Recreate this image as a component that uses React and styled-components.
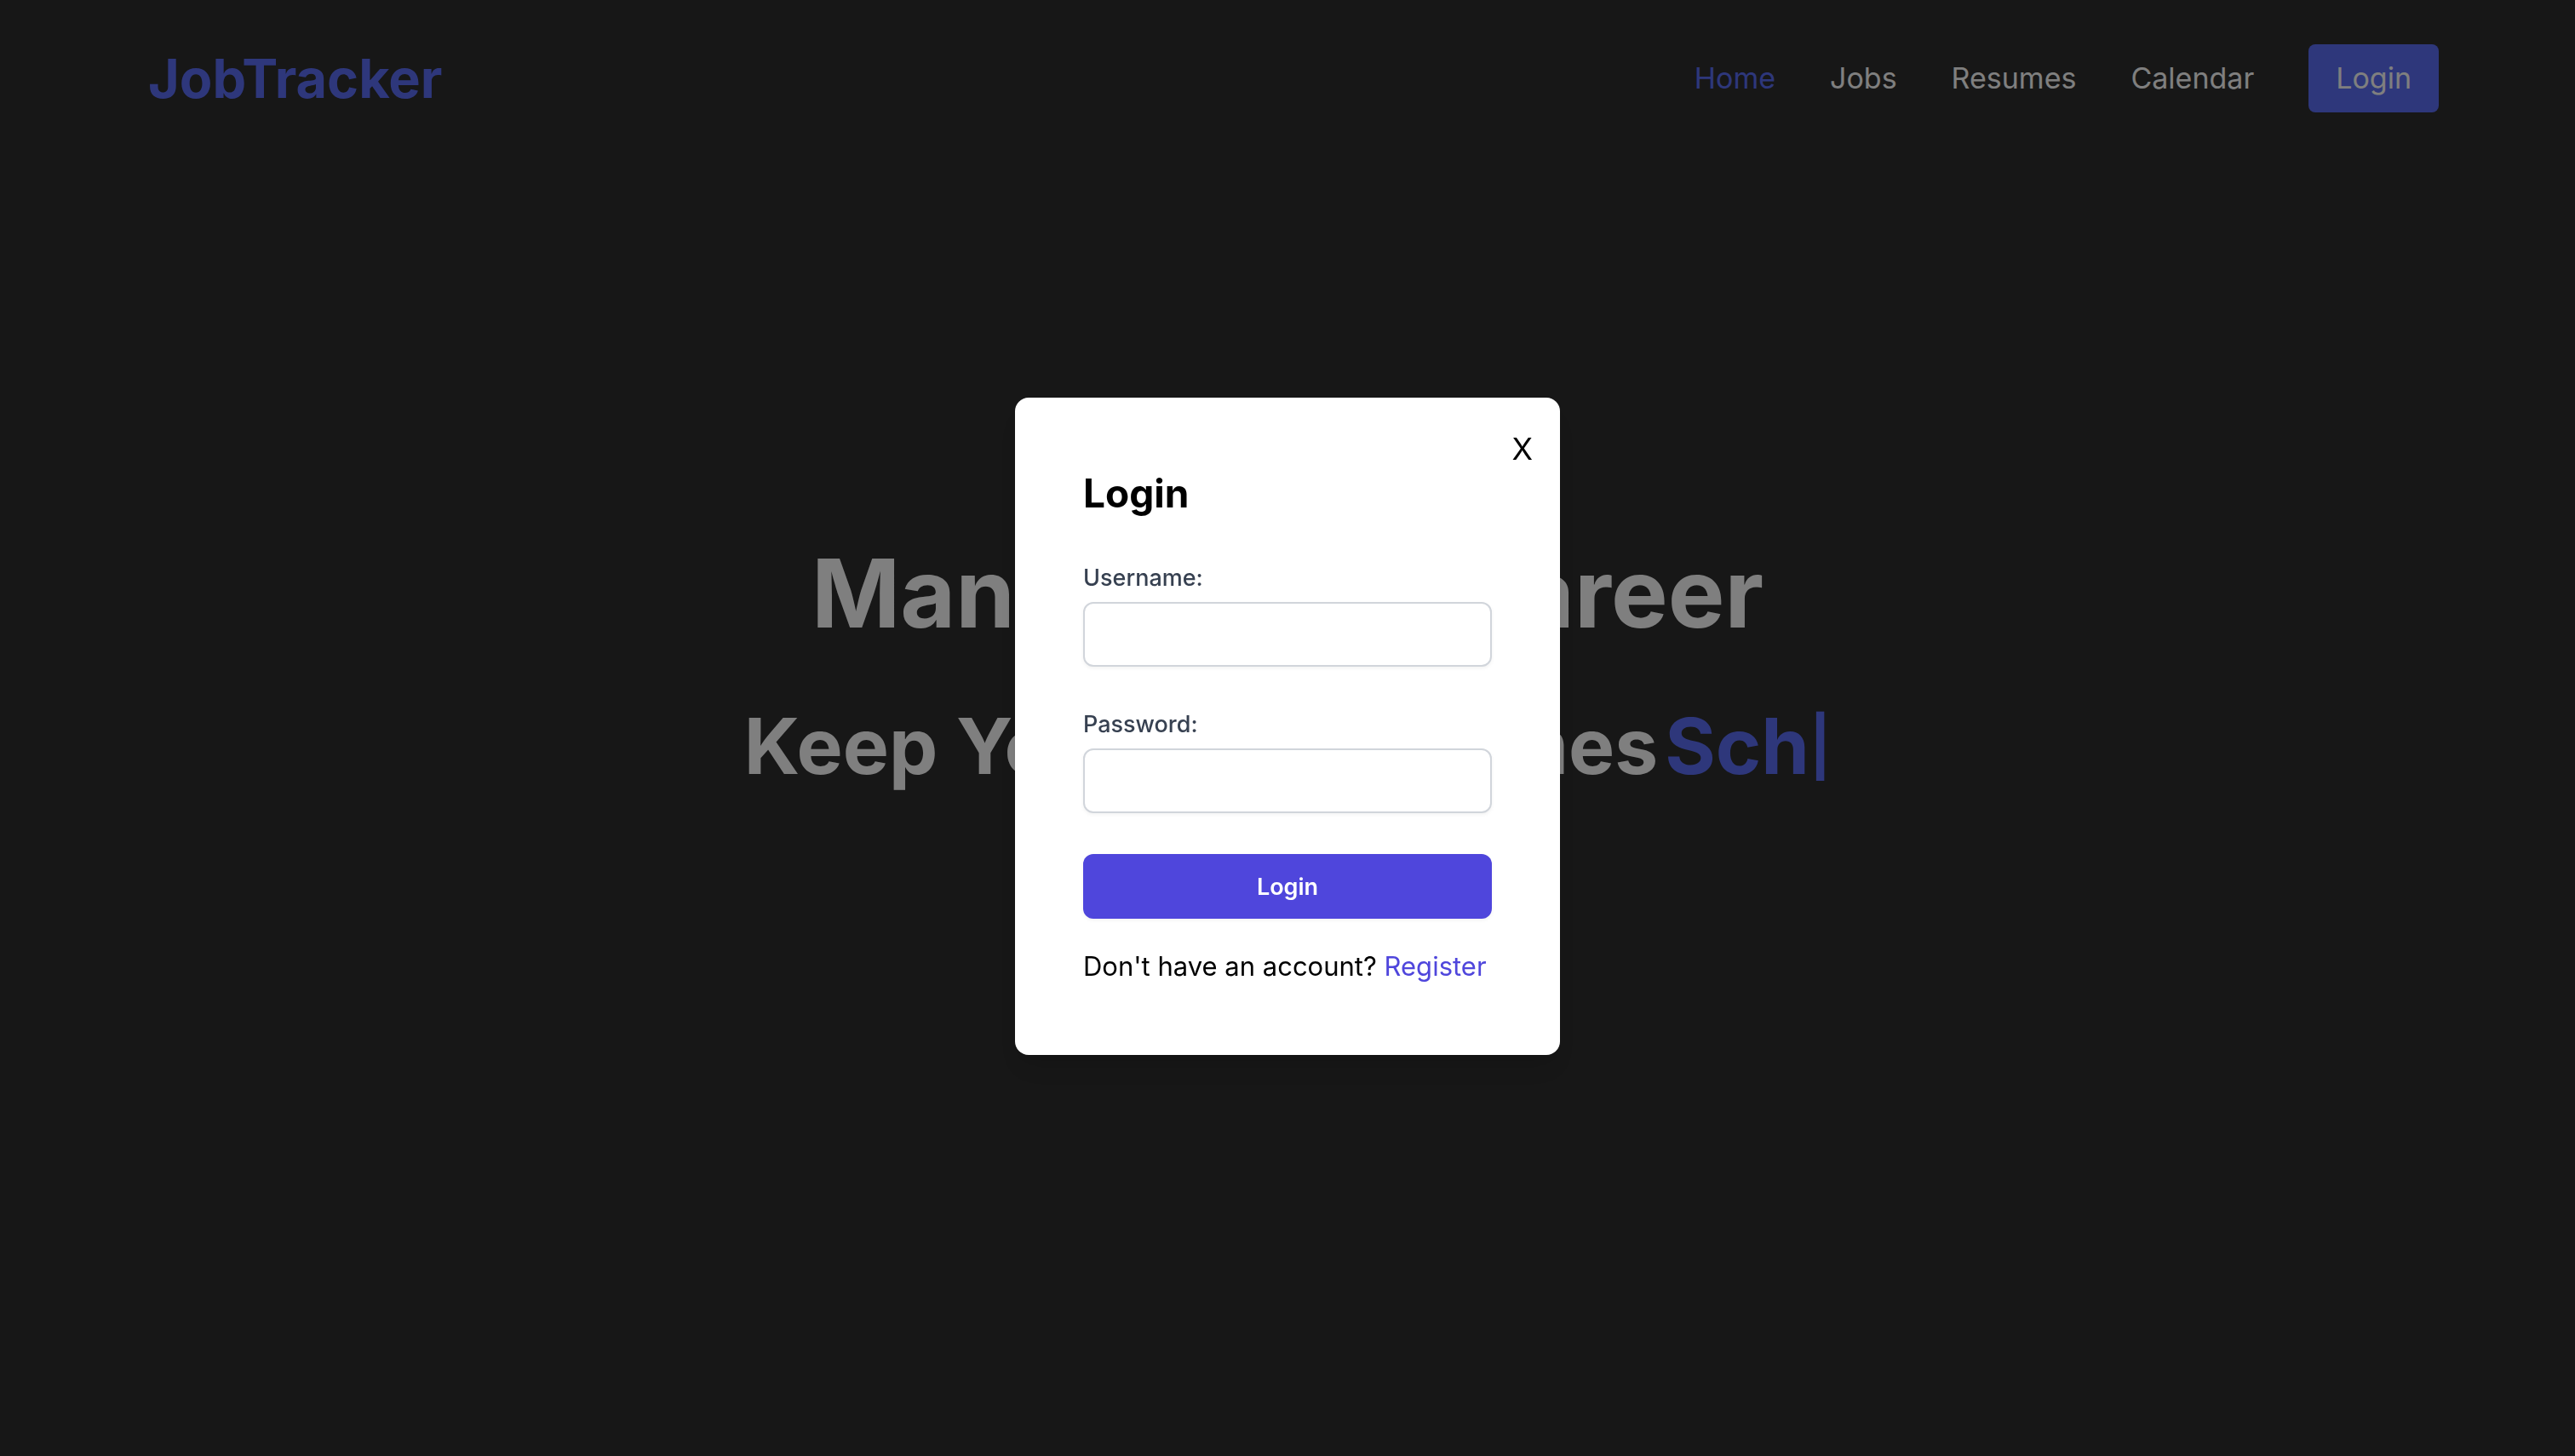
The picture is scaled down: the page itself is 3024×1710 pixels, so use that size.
import React, { useState } from "react";
import styled, { createGlobalStyle } from "styled-components";

const indigo = "#5c6ef6";
const violet = "#4f46dc";

const GlobalStyle = createGlobalStyle`
  *, *::before, *::after { box-sizing: border-box; }
  body {
    margin: 0;
    background: #2e2e2e;
    color: #fff;
    font-family: Inter, "Liberation Sans", sans-serif;
  }
  h1, h2, p { margin: 0; }
  a { text-decoration: none; }
  button, input { font: inherit; }
  button { border: 0; padding: 0; cursor: pointer; }
`;

const Page = styled.div`
  min-height: 100vh;
  display: flex;
  flex-direction: column;
`;

const Header = styled.header`
  display: flex;
  align-items: center;
  justify-content: space-between;
  height: 184px;
  padding: 0 160px 0 174px;
`;

const Brand = styled.a`
  color: ${indigo};
  font-size: 63px;
  font-weight: 700;
  line-height: 72px;
`;

const Nav = styled.nav`
  display: flex;
  align-items: center;
  gap: 64px;
`;

const NavLink = styled.a`
  color: ${(p) => (p.$active ? indigo : "#fff")};
  font-size: 34px;
  line-height: 48px;
`;

const NavButton = styled.button`
  padding: 16px 32px;
  border-radius: 8px;
  background: ${indigo};
  color: #fff;
  font-size: 34px;
  line-height: 48px;
`;

const Hero = styled.main`
  display: flex;
  flex-direction: column;
  align-items: center;
  gap: 72px;
  padding-top: 452px;
`;

const Headline = styled.h1`
  font-size: 112px;
  font-weight: 700;
  line-height: 120px;
`;

const Tagline = styled.p`
  display: flex;
  gap: 8px;
  font-size: 91px;
  font-weight: 700;
  line-height: 96px;
  white-space: nowrap;
`;

const Typed = styled.span`
  display: flex;
  align-items: center;
  color: ${indigo};
`;

const Cursor = styled.span`
  font-size: 68px;
`;

const Overlay = styled.div`
  position: fixed;
  inset: 0;
  display: flex;
  align-items: center;
  justify-content: center;
  padding-bottom: 4px;
  background: rgba(0, 0, 0, 0.5);
`;

const Dialog = styled.section`
  position: relative;
  width: 640px;
  padding: 80px;
  border-radius: 16px;
  background: #fff;
  color: #000;
  box-shadow: 0 20px 30px -6px rgba(0, 0, 0, 0.1), 0 8px 12px -4px rgba(0, 0, 0, 0.1);
`;

const CloseButton = styled.button`
  position: absolute;
  top: 32px;
  right: 32px;
  background: none;
  color: #000;
  font-size: 36px;
  line-height: 56px;
`;

const Title = styled.h2`
  font-size: 46px;
  font-weight: 700;
  line-height: 64px;
`;

const Form = styled.form`
  display: flex;
  flex-direction: column;
  gap: 48px;
  margin-top: 44px;
`;

const Fields = styled.div`
  display: flex;
  flex-direction: column;
  gap: 44px;
`;

const Field = styled.div`
  display: flex;
  flex-direction: column;
  gap: 4px;
`;

const Label = styled.label`
  color: #374151;
  font-size: 27px;
  font-weight: 500;
  line-height: 48px;
`;

const TextInput = styled.input`
  width: 100%;
  height: 76px;
  padding: 0 24px;
  border: 2px solid #d1d5db;
  border-radius: 12px;
  background: #fff;
  font-size: 27px;
  outline: none;
  box-shadow: 0 2px 4px rgba(0, 0, 0, 0.05);
`;

const SubmitButton = styled.button`
  height: 76px;
  border-radius: 12px;
  background: ${violet};
  color: #fff;
  font-size: 27px;
  font-weight: 600;
  box-shadow: 0 2px 4px rgba(0, 0, 0, 0.05);
`;

const Prompt = styled.p`
  margin-top: 32px;
  font-size: 31px;
  line-height: 48px;
  white-space: nowrap;
`;

const PromptLink = styled.a`
  color: ${violet};
`;

const links = ["Home", "Jobs", "Resumes", "Calendar"];

export default function App() {
  const [open, setOpen] = useState(true);

  return (
    <>
      <GlobalStyle />
      <Page>
        <Header>
          <Brand href="#">JobTracker</Brand>
          <Nav>
            {links.map((name, i) => (
              <NavLink key={name} href="#" $active={i === 0}>
                {name}
              </NavLink>
            ))}
            <NavButton type="button" onClick={() => setOpen(true)}>
              Login
            </NavButton>
          </Nav>
        </Header>
        <Hero>
          <Headline>Manage Your Career</Headline>
          <Tagline>
            <span>Keep Your Job Resumes</span>
            <Typed>
              Sch<Cursor>|</Cursor>
            </Typed>
          </Tagline>
        </Hero>
      </Page>
      {open && (
        <Overlay>
          <Dialog role="dialog" aria-modal="true" aria-labelledby="login-title">
            <CloseButton type="button" onClick={() => setOpen(false)}>
              X
            </CloseButton>
            <Title id="login-title">Login</Title>
            <Form onSubmit={(e) => e.preventDefault()}>
              <Fields>
                <Field>
                  <Label htmlFor="username">Username:</Label>
                  <TextInput id="username" type="text" />
                </Field>
                <Field>
                  <Label htmlFor="password">Password:</Label>
                  <TextInput id="password" type="password" />
                </Field>
              </Fields>
              <SubmitButton type="submit">Login</SubmitButton>
            </Form>
            <Prompt>
              Don't have an account? <PromptLink href="#">Register</PromptLink>
            </Prompt>
          </Dialog>
        </Overlay>
      )}
    </>
  );
}
